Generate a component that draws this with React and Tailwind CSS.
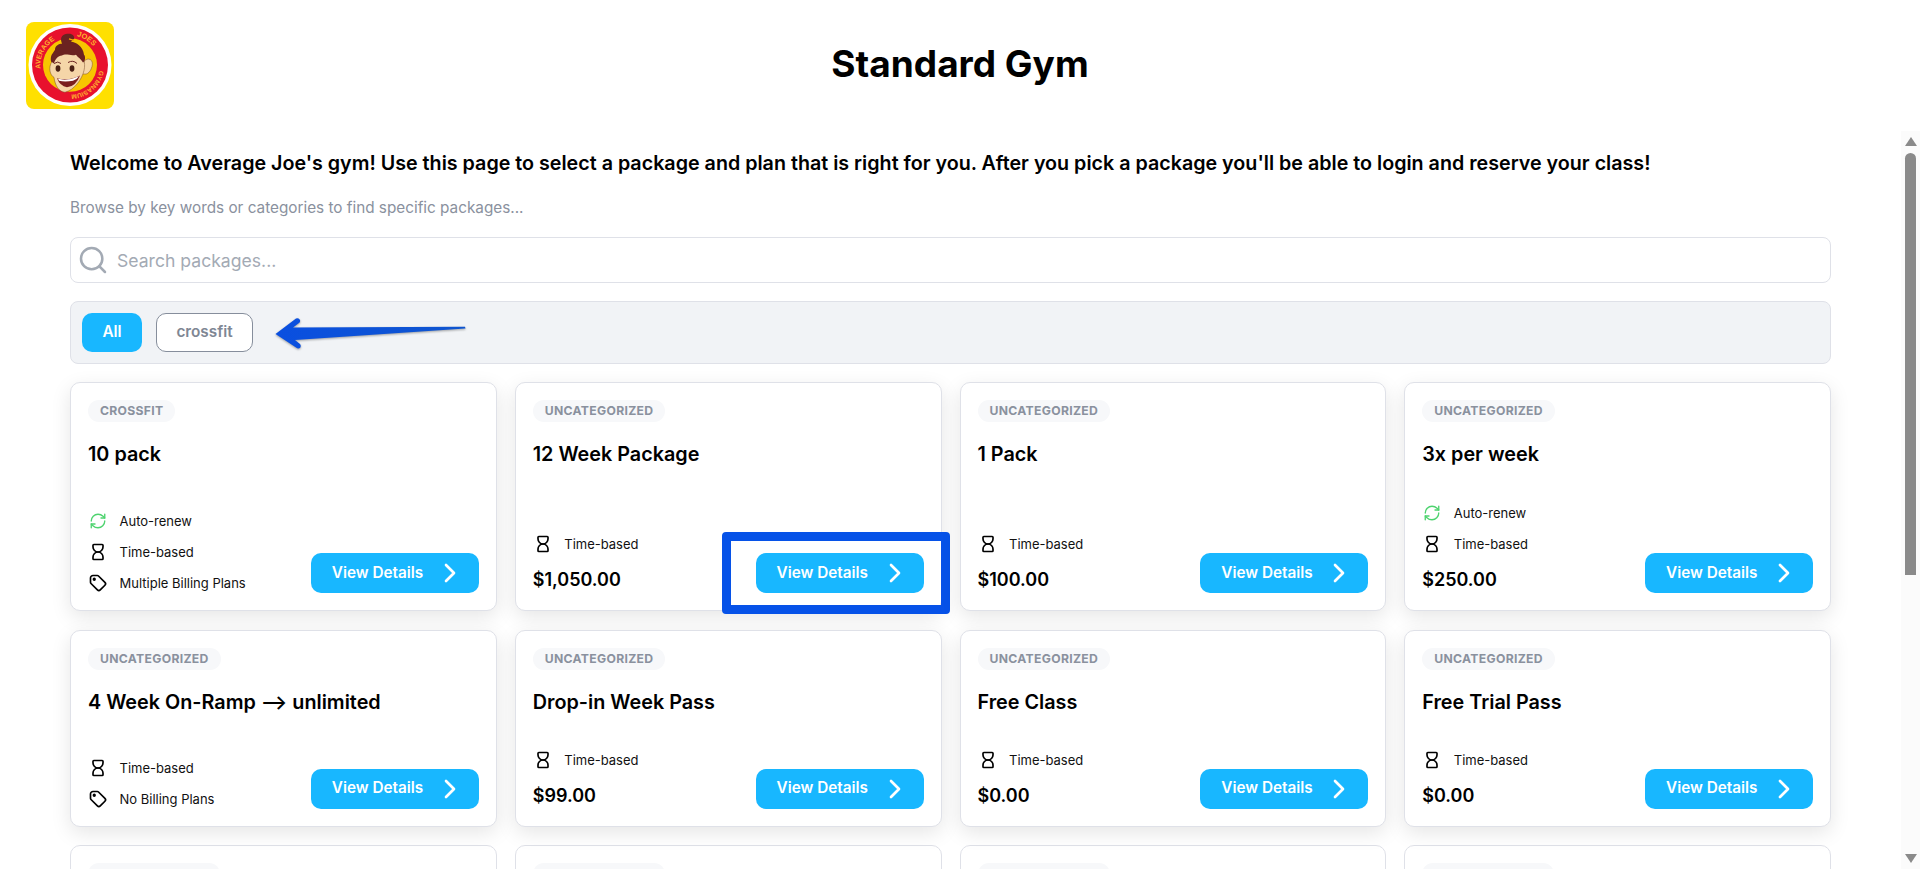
import React from 'react';
import { ChevronRight, RefreshCw, Search } from 'lucide-react';
import { TbHourglassEmpty, TbTag } from 'react-icons/tb';

const packages = [
  { id: 1, category: 'CROSSFIT', title: '10 pack', renew: true, billing: 'Multiple Billing Plans' },
  { id: 2, category: 'UNCATEGORIZED', title: '12 Week Package', price: '$1,050.00', highlight: true },
  { id: 3, category: 'UNCATEGORIZED', title: '1 Pack', price: '$100.00' },
  { id: 4, category: 'UNCATEGORIZED', title: '3x per week', renew: true, price: '$250.00' },
  { id: 5, category: 'UNCATEGORIZED', title: '4 Week On-Ramp --> unlimited', billing: 'No Billing Plans' },
  { id: 6, category: 'UNCATEGORIZED', title: 'Drop-in Week Pass', price: '$99.00' },
  { id: 7, category: 'UNCATEGORIZED', title: 'Free Class', price: '$0.00' },
  { id: 8, category: 'UNCATEGORIZED', title: 'Free Trial Pass', price: '$0.00' },
];

const Logo = () => (
  <svg viewBox="0 0 88 88" preserveAspectRatio="none" className="h-[87px] w-[88px] shrink-0">
    <rect width="88" height="88" rx="8" fill="#ffe000" />
    <circle cx="44" cy="43.5" r="41.5" fill="#fff" />
    <circle cx="44" cy="43.5" r="38" fill="#e8112d" />
    <circle cx="44" cy="43.5" r="27" fill="#f7c600" />
    <defs>
      <path id="logo-average" d="M14.7 47.3 A29.5 29.5 0 0 1 30 17.5" />
      <path id="logo-joes" d="M50.7 14.3 A30 30 0 0 1 72 33" />
      <path id="logo-gym" d="M73.5 49 A30 30 0 0 1 36 72.4" />
    </defs>
    <text fontSize="7" fontWeight="700" fill="#ffb52e" fontFamily="Liberation Sans, sans-serif">
      <textPath href="#logo-average">AVERAGE</textPath>
    </text>
    <text fontSize="7.5" fontWeight="700" fill="#ffb52e" fontFamily="Liberation Sans, sans-serif">
      <textPath href="#logo-joes">JOES</textPath>
    </text>
    <text fontSize="6.5" fontWeight="700" fill="#ffb52e" fontFamily="Liberation Sans, sans-serif">
      <textPath href="#logo-gym">GYMNASIUM</textPath>
    </text>
    {/* ear */}
    <path d="M58 40 C62 35 68 38 66 45 C64 52 60 54 56 52 Z" fill="#f5d6a8" stroke="#7a4a2a" strokeWidth="0.5" />
    {/* face */}
    <path d="M26 40 C30 30 42 27 50 30 C57 33 60 41 58 49 C56 58 48 69 39 71 C33 71 29 64 28 56 C24 54 22 46 26 40 Z" fill="#f5d6a8" stroke="#7a4a2a" strokeWidth="0.5" />
    {/* hair */}
    <path d="M25 40 C24 33 27 32 29 28 C29 24 33 22 36 22 C34 17 35 13 41 12 C46 11 49 14 48 17 L45 20 C50 20 57 25 58 33 C60 35 59 40 57 41 C55 37 52 36 50 33 C45 35 40 31 36 34 C32 34 29 38 28 42 Z" fill="#6b2320" />
    <path d="M43 17 L48 18.5" stroke="#f7a600" strokeWidth="1.4" />
    {/* eyes */}
    <ellipse cx="32" cy="47" rx="2.4" ry="3.2" fill="#4a2114" />
    <ellipse cx="46" cy="47" rx="2.4" ry="3.2" fill="#4a2114" />
    <path d="M28 42 Q32 39 35 42 M42 41 Q47 38 51 42" stroke="#6b2320" strokeWidth="1" fill="none" />
    {/* mouth */}
    <path d="M31 57 Q42 60 54 54 Q50 65 41 66 Q34 65 31 57 Z" fill="#7a1e1e" />
    <path d="M32 57.5 Q42 60 53 54.8 Q51 58 47 59.5 Q39 61 33 59.5 Z" fill="#fff" />
  </svg>
);

const InfoRow = ({ icon, text }) => (
  <div className="flex h-[18px] items-center gap-[11.5px]">
    <span className="flex w-5 justify-center">{icon}</span>
    <span className="text-[13px] leading-[18px] text-[#111]">{text}</span>
  </div>
);

const PackageCard = ({ pkg }) => (
  <div className="relative flex flex-col justify-between rounded-[10px] border border-[#dfe1e8] bg-white p-[17px] shadow-[0_6px_20px_rgba(0,0,0,0.1)]">
    <div>
      <span className="block w-fit rounded-full bg-[#f7f8fa] px-3 py-[3px] text-[12.2px] leading-4 font-bold tracking-[0.3px] text-[#8a919e]">
        {pkg.category}
      </span>
      <h3 className="mt-[18px] text-[19.8px] leading-7 font-semibold text-black">{pkg.title}</h3>
    </div>
    <div className="flex items-end justify-between">
      <div className="flex flex-col gap-[13px] pb-[1px]">
        {pkg.renew && <InfoRow icon={<RefreshCw size={18} strokeWidth={1.8} className="text-[#4ed36f]" />} text="Auto-renew" />}
        <InfoRow icon={<TbHourglassEmpty size={20} className="text-black" />} text="Time-based" />
        {pkg.billing && <InfoRow icon={<TbTag size={20} className="text-black" />} text={pkg.billing} />}
        {pkg.price && <span className="mt-[2px] text-[18px] leading-6 font-semibold text-black">{pkg.price}</span>}
      </div>
      <button className="flex h-10 w-[168px] items-center justify-between rounded-[10px] bg-[#18b7ff] pl-[21px] pr-[13px] text-[15.3px] font-semibold text-white">
        View Details
        <ChevronRight size={32} strokeWidth={2} />
      </button>
    </div>
    {pkg.highlight && (
      <div className="absolute -right-[9px] -bottom-[4px] h-[82px] w-[228px] rounded-[4px] border-[9px] border-[#0652e8]" />
    )}
  </div>
);

// next row is cut off by the fold, only the top of the badge shows
const ClippedCard = () => (
  <div className="rounded-[10px] border border-[#dfe1e8] bg-white p-[17px]">
    <div className="h-[22px] w-[132px] rounded-full bg-[#f7f8fa]" />
  </div>
);

const Scrollbar = () => (
  <div className="flex w-[19px] shrink-0 flex-col items-center bg-[#fbfbfb] pt-[6px]">
    <div className="h-0 w-0 border-x-[6px] border-b-[9px] border-x-transparent border-b-[#8a8a8a]" />
    <div className="mt-[7px] h-[422px] w-[11px] rounded-t-[6px] bg-[#8a8a8a]" />
    <div className="mt-auto mb-[6px] h-0 w-0 border-x-[6px] border-t-[9px] border-x-transparent border-t-[#8a8a8a]" />
  </div>
);

export default function App() {
  return (
    <div className="flex h-[869px] flex-col overflow-hidden bg-white font-['Inter',sans-serif]">
      <header className="relative flex h-[131px] shrink-0 items-start pl-[26px] pt-[22px]">
        <Logo />
        <h1 className="absolute left-0 right-0 top-[41px] text-center text-[37px] leading-[46px] font-bold text-black">Standard Gym</h1>
      </header>

      <div className="flex min-h-0 flex-1">
        <main className="min-w-0 flex-1 overflow-hidden pl-[70px] pr-[70px]">
          <p className="mt-[18px] text-[19.7px] leading-7 font-semibold text-black">
            Welcome to Average Joe's gym! Use this page to select a package and plan that is right for you. After you pick a package you'll be able to login and reserve your class!
          </p>
          <p className="mt-[21px] text-[15.3px] leading-5 text-[#8a919e]">Browse by key words or categories to find specific packages...</p>

          <div className="mt-[19px] flex h-[46px] items-center gap-2 rounded-[8px] border border-[#dfe1e8] bg-white pl-[6px]">
            <Search size={32} strokeWidth={1.9} className="text-[#a3aab4]" />
            <span className="pt-[2px] text-[17.6px] text-[#a3aab4]">Search packages...</span>
          </div>

          <div className="relative mt-[18px] flex h-[63px] items-center gap-[14px] rounded-[8px] border border-[#dfe1e8] bg-[#f1f3f6] pl-[11px]">
            <button className="h-[39px] w-[60px] rounded-[10px] bg-[#18b7ff] text-[15.3px] font-semibold text-white">All</button>
            <button className="h-[39px] w-[97px] rounded-[10px] border border-[#868e9c] bg-white text-[15.3px] font-semibold text-[#7f8794]">crossfit</button>
            <svg viewBox="0 0 200 36" className="absolute left-[204px] top-[15px] h-[36px] w-[200px] drop-shadow-[0_1px_1px_rgba(0,0,0,0.35)]">
              <defs>
                <linearGradient id="arrow-fill" x1="0" x2="1" y1="0" y2="0">
                  <stop offset="0" stopColor="#0a4fe0" />
                  <stop offset="1" stopColor="#0f55cf" />
                </linearGradient>
              </defs>
              <path d="M0.5 17 L21 1.5 Q24 0.5 25 3 Q25.5 5 24 6 L18 10.5 L190 9.8 L190.5 11.5 L20 23 L25 27 Q26.5 29 25 31 Q23 32 21 30.5 Z" fill="url(#arrow-fill)" />
            </svg>
          </div>

          <div className="mt-[18px] grid grid-cols-4 grid-rows-[229px_197px_197px] gap-x-[18px] gap-y-[18.5px]">
            {packages.map((pkg) => (
              <PackageCard key={pkg.id} pkg={pkg} />
            ))}
            <ClippedCard />
            <ClippedCard />
            <ClippedCard />
            <ClippedCard />
          </div>
        </main>
        <Scrollbar />
      </div>
    </div>
  );
}
